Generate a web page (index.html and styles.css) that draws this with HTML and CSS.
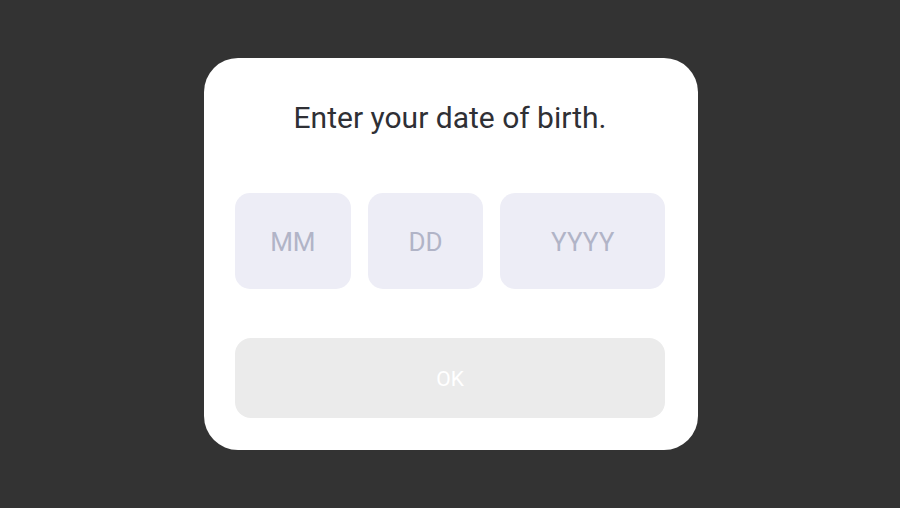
FILE: index.html
```html
<!DOCTYPE html>
<html lang="en">
<head>
<meta charset="utf-8">
<title>Date of birth</title>
<link rel="stylesheet" href="styles.css">
</head>
<body>
<div class="overlay">
  <div class="dialog">
    <h1 class="title">Enter your date of birth.</h1>
    <div class="fields">
      <div class="field field-short">MM</div>
      <div class="field field-short">DD</div>
      <div class="field field-long">YYYY</div>
    </div>
    <button class="ok" type="button">OK</button>
  </div>
</div>
</body>
</html>
```
FILE: styles.css
```css
html, body {
  margin: 0;
  padding: 0;
  height: 100%;
}
body {
  background: #333333;
  font-family: Roboto, "Noto Sans", "Liberation Sans", sans-serif;
}
.overlay {
  box-sizing: border-box;
  height: 100vh;
  padding-left: 2px;
  display: flex;
  align-items: center;
  justify-content: center;
}
.dialog {
  box-sizing: border-box;
  width: 494px;
  height: 392px;
  background: #ffffff;
  border-radius: 34px;
  padding: 42px 33px 32px 31px;
  display: flex;
  flex-direction: column;
}
.title {
  margin: 0;
  font-size: 30px;
  font-weight: 400;
  line-height: 36px;
  color: #2f3035;
  text-align: center;
}
.fields {
  margin-top: 57px;
  display: flex;
  gap: 17px;
}
.field {
  height: 96px;
  background: #ededf6;
  border-radius: 15px;
  display: flex;
  align-items: center;
  justify-content: center;
  font-size: 26px;
  padding-top: 2px;
  box-sizing: border-box;
  color: #b1b4c7;
}
.field-short {
  width: 116px;
}
.field-long {
  width: 165px;
}
.ok {
  margin-top: 49px;
  height: 80px;
  width: 430px;
  border: none;
  border-radius: 16px;
  background: #ebebeb;
  color: #ffffff;
  font-family: inherit;
  font-size: 21px;
  padding: 2px 0 0 0;
}
```
